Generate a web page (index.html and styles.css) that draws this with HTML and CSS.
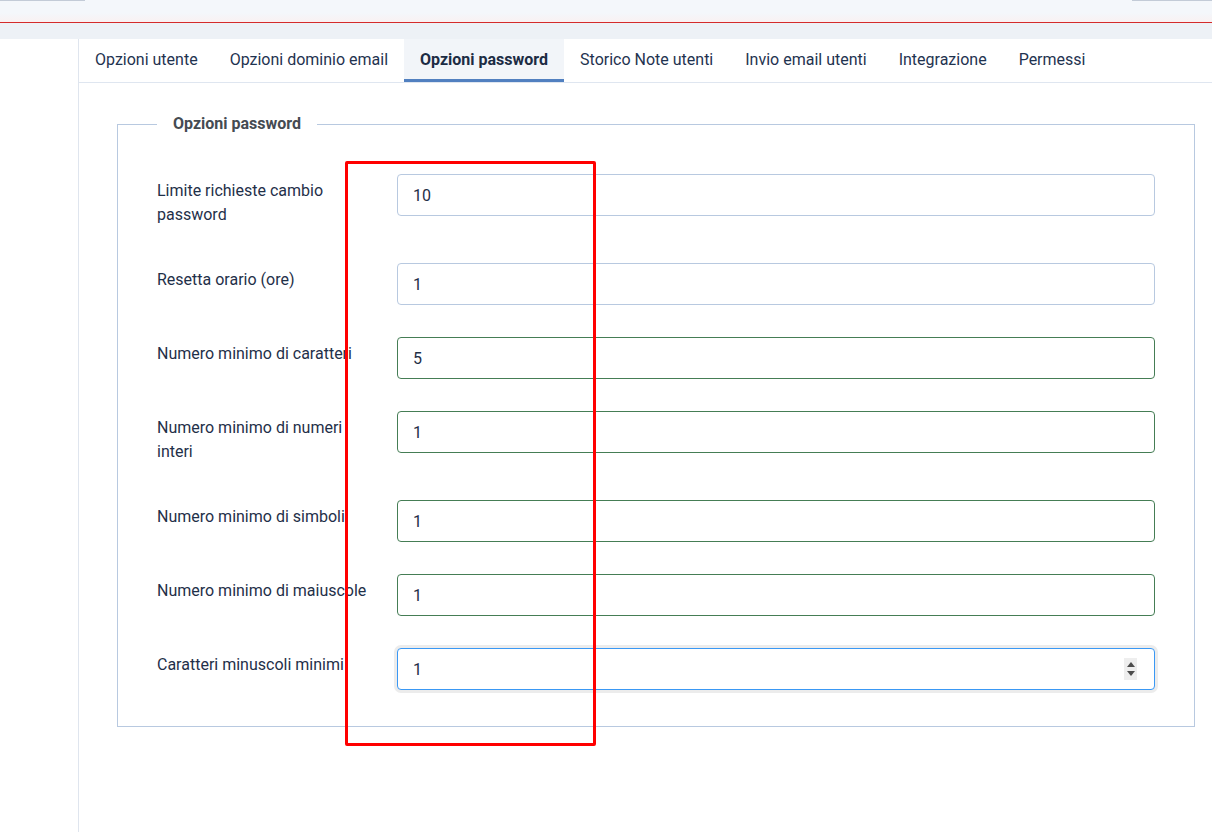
FILE: index.html
```html
<!DOCTYPE html>
<html lang="it">
<head>
<meta charset="utf-8">
<title>Opzioni password</title>
<link rel="stylesheet" href="styles.css">
</head>
<body>
<div class="topbar">
  <div class="top-left"></div>
  <div class="top-right"></div>
</div>
<div class="band"></div>
<div class="main">
  <div class="sidebar"></div>
  <div class="content">
    <div class="tabs">
      <div class="tab">Opzioni utente</div>
      <div class="tab">Opzioni dominio email</div>
      <div class="tab active">Opzioni password</div>
      <div class="tab">Storico Note utenti</div>
      <div class="tab">Invio email utenti</div>
      <div class="tab">Integrazione</div>
      <div class="tab">Permessi</div>
    </div>
    <fieldset class="options">
      <legend>Opzioni password</legend>
      <div class="row">
        <label class="lbl">Limite richieste cambio password</label>
        <div class="field"><input class="inp" type="text" value="10"></div>
      </div>
      <div class="row">
        <label class="lbl">Resetta orario (ore)</label>
        <div class="field"><input class="inp" type="text" value="1"></div>
      </div>
      <div class="row">
        <label class="lbl">Numero minimo di caratteri</label>
        <div class="field"><input class="inp valid" type="text" value="5"></div>
      </div>
      <div class="row">
        <label class="lbl">Numero minimo di numeri interi</label>
        <div class="field"><input class="inp valid" type="text" value="1"></div>
      </div>
      <div class="row">
        <label class="lbl">Numero minimo di simboli</label>
        <div class="field"><input class="inp valid" type="text" value="1"></div>
      </div>
      <div class="row">
        <label class="lbl">Numero minimo di maiuscole</label>
        <div class="field"><input class="inp valid" type="text" value="1"></div>
      </div>
      <div class="row">
        <label class="lbl">Caratteri minuscoli minimi</label>
        <div class="field"><input class="inp focus" type="text" value="1"><span class="spin"><span class="up"></span><span class="down"></span></span></div>
      </div>
    </fieldset>
  </div>
</div>
<div class="annot"></div>
</body>
</html>
```
FILE: styles.css
```css
html, body {
  margin: 0;
  padding: 0;
  background: #ffffff;
  font-family: Roboto, "Liberation Sans", sans-serif;
}
body {
  position: relative;
  height: 832px;
  overflow: hidden;
}
.topbar {
  height: 22px;
  background: linear-gradient(to bottom, #f4f7fb 0, #f4f7fb 13px, #f9f1f2 22px);
  border-bottom: 1px solid #d42b2b;
  display: flex;
  justify-content: space-between;
}
.top-left {
  width: 85px;
  height: 0;
  border-bottom: 1px solid #c3cbd7;
}
.top-right {
  width: 80px;
  height: 0;
  border-bottom: 1px solid #c3cbd7;
}
.band {
  height: 16px;
  background: #edf1f6;
}
.main {
  display: flex;
  min-height: 800px;
}
.sidebar {
  width: 78px;
  border-right: 1px solid #dfe5ee;
  flex: none;
}
.content {
  flex: 1;
  min-width: 0;
}
.tabs {
  display: flex;
  border-bottom: 1px solid #dfe6f0;
  height: 43px;
}
.tab {
  padding: 0 16px;
  height: 40px;
  line-height: 41px;
  border-bottom: 3px solid transparent;
  font-size: 16px;
  color: #1f3350;
  white-space: nowrap;
}
.tab.active {
  background: #f2f5f9;
  border-bottom-color: #5180c0;
  font-weight: 700;
  color: #1c2c44;
}
.options {
  margin: 31px 17px 0 38px;
  border: 1px solid #b8c9e0;
  padding: 40px 39px 36px 39px;
  min-width: 0;
}
.options legend {
  padding: 0 16px;
  font-size: 16px;
  line-height: 20px;
  font-weight: 700;
  color: #454b52;
}
.row {
  display: grid;
  grid-template-columns: 240px 1fr;
  margin-bottom: 32px;
}
.row:last-child {
  margin-bottom: 0;
}
.lbl {
  padding: 5px 24px 4px 0;
  font-size: 16px;
  line-height: 24px;
  color: #1f3049;
}
.field {
  position: relative;
}
.inp {
  display: block;
  box-sizing: border-box;
  width: 100%;
  height: 42px;
  margin: 0;
  padding: 0 15px;
  border: 1px solid #b8c9e0;
  border-radius: 4px;
  font-family: Roboto, "Liberation Sans", sans-serif;
  font-size: 16px;
  color: #1f2f47;
  background: #ffffff;
  outline: none;
}
.inp.valid {
  border-color: #457d55;
}
.inp.focus {
  border-color: #3a98f4;
  box-shadow: 0 0 0 3px #ececec;
}
.spin {
  position: absolute;
  right: 18px;
  top: 10px;
  width: 13px;
  height: 22px;
  background: #eeeeee;
  display: flex;
  flex-direction: column;
  align-items: center;
  justify-content: center;
  gap: 4px;
}
.up {
  width: 0;
  height: 0;
  border-left: 4px solid transparent;
  border-right: 4px solid transparent;
  border-bottom: 5px solid #4d4d4d;
}
.down {
  width: 0;
  height: 0;
  border-left: 4px solid transparent;
  border-right: 4px solid transparent;
  border-top: 5px solid #4d4d4d;
}
.annot {
  position: absolute;
  left: 345px;
  top: 161px;
  width: 245px;
  height: 579px;
  border: 3px solid #ff0000;
  border-radius: 2px;
}
```
